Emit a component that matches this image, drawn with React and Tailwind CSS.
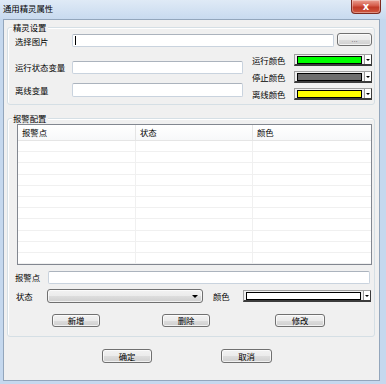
import React from "react";

const BTN =
  "flex items-center justify-center rounded-[3px] border border-[#707070] bg-[linear-gradient(#f2f2f2_0%,#ebebeb_50%,#dddddd_51%,#cfcfcf_100%)] shadow-[inset_0_0_0_1px_rgba(255,255,255,0.7)] leading-none";

function Btn({ w, className = "", primary, children }) {
  return (
    <div
      className={`${BTN} ${primary ? "border-[#3c7fb1] shadow-[inset_0_0_0_1px_#a9dbf6]" : ""} ${className}`}
      style={{ width: w }}
    >
      {children}
    </div>
  );
}

function TextBox({ w, h = 13, caret }) {
  return (
    <div
      className="flex items-center rounded-[2px] border border-[#c9d3de] border-t-[#abb3bd] bg-white pl-[2px]"
      style={{ width: w, height: h }}
    >
      {caret && <div className="h-[9px] w-px bg-black" />}
    </div>
  );
}

function ColorBox({ w, color }) {
  return (
    <div
      className="flex h-[12px] items-center border-t border-l border-b-2 border-r border-t-[#a0a0a0] border-l-[#a0a0a0] border-b-[#3c3c3c] border-r-[#3c3c3c] bg-[#f0f0f0] pl-[2px]"
      style={{ width: w }}
    >
      <div className="h-[8px] flex-1 border border-black" style={{ background: color }} />
      <div className="ml-[2px] h-full w-px bg-[#9a9a9a]" />
      <div className="flex h-full w-[6px] items-center justify-center bg-white">
        <div className="h-0 w-0 border-x-[2px] border-t-[2px] border-x-transparent border-t-black" />
      </div>
    </div>
  );
}

function Group({ title, className = "", children }) {
  return (
    <div
      className={`relative ml-[3px] w-[368px] rounded-[3px] border border-[#d5dfe5] shadow-[inset_1px_1px_0_#fff] ${className}`}
    >
      <span className="absolute left-[4px] top-[-6px] bg-[#f0f0f0] px-px leading-[10px]">{title}</span>
      {children}
    </div>
  );
}

export default function App() {
  return (
    <div className="flex h-[384px] w-[386px] flex-col bg-[#c5d8ee] font-['Noto_Sans_CJK_SC',sans-serif] text-[8.4px] text-black">
      {/* title bar */}
      <div className="flex h-[19px] items-start bg-[linear-gradient(180deg,#dfeaf6,#c8daef)]">
        <span className="ml-[3px] mt-[3px] leading-[10px]">通用精灵属性</span>
        <div className="ml-auto mr-[5px] flex h-[14px] w-[30px] items-center justify-center rounded-b-[4px] border border-t-0 border-[#7d2a20] bg-[linear-gradient(180deg,#eba193,#d45a48_45%,#c13a27_55%,#d0583f)] shadow-[inset_0_0_0_1px_rgba(255,255,255,0.35)]">
          <span className="text-[10px] font-bold leading-none text-white font-['DejaVu_Sans',sans-serif]">x</span>
        </div>
      </div>

      {/* client area */}
      <div className="ml-[3px] h-[362px] w-[377px] border border-[#93a6bc] bg-[#f0f0f0]">
        <Group title="精灵设置" className="mt-[7px] h-[78px] pl-[7px] pt-[5px]">
          <div className="flex h-[14px] items-start">
            <span className="mt-[3px] w-[57px] leading-[10px]">选择图片</span>
            <div className="mt-px">
              <TextBox w={262} caret />
            </div>
            <Btn w={35} className="ml-[3px] h-[13px] text-[#6d6d6d] font-['Liberation_Sans',sans-serif] text-[8px]">...</Btn>
          </div>

          <div className="mt-[7px] flex">
            <div className="w-[228px] pt-[7px]">
              <div className="flex h-[13px] items-center">
                <span className="w-[57px]">运行状态变量</span>
                <TextBox w={171} />
              </div>
              <div className="mt-[9px] flex h-[14px] items-center">
                <span className="w-[57px]">离线变量</span>
                <TextBox w={172} h={14} />
              </div>
            </div>
            <div className="ml-[9px] flex flex-col gap-[5px]">
              <div className="flex h-[12px] items-center">
                <span className="w-[42px]">运行颜色</span>
                <ColorBox w={78} color="#00ff00" />
              </div>
              <div className="flex h-[12px] items-center">
                <span className="w-[42px]">停止颜色</span>
                <ColorBox w={78} color="#6e6e6e" />
              </div>
              <div className="flex h-[12px] items-center">
                <span className="w-[42px]">离线颜色</span>
                <ColorBox w={78} color="#ffff00" />
              </div>
            </div>
          </div>
        </Group>

        <Group title="报警配置" className="mt-[13px] h-[219px] pt-[5px]">
          {/* list view */}
          <div className="ml-[9px] h-[141px] w-[355px] overflow-hidden border border-[#828790] bg-white">
            <div className="grid h-[16px] grid-cols-[118px_117px_1fr] border-b border-[#e5e5e5] bg-[linear-gradient(#ffffff,#f7f8f9)]">
              <div className="flex items-center border-r border-[#e5e5e5] pl-[4px]">报警点</div>
              <div className="flex items-center border-r border-[#e5e5e5] pl-[4px]">状态</div>
              <div className="flex items-center pl-[4px]">颜色</div>
            </div>
            {Array.from({ length: 11 }).map((_, i) => (
              <div key={i} className="grid h-[11.2px] grid-cols-[118px_117px_1fr] border-b border-[#f0f0f0]">
                <div className="border-r border-[#f0f0f0]" />
                <div className="border-r border-[#f0f0f0]" />
                <div />
              </div>
            ))}
          </div>

          <div className="mt-[6px] flex h-[13px] items-center pl-[7px]">
            <span className="w-[33px]">报警点</span>
            <TextBox w={322} />
          </div>

          <div className="mt-[5px] flex h-[14px] items-center">
            <span className="ml-[8px] w-[31px]">状态</span>
            <div className={`${BTN} h-[14px] w-[156px] justify-end pr-[4px]`}>
              <div className="h-0 w-0 border-x-[3px] border-t-[3px] border-x-transparent border-t-black" />
            </div>
            <span className="ml-[10px] w-[30px]">颜色</span>
            <ColorBox w={128} color="#ffffff" />
          </div>

          <div className="mt-[11px] flex h-[13px] items-center">
            <Btn w={48} className="ml-[44px] h-[13px]">新增</Btn>
            <Btn w={48} className="ml-[62px] h-[13px]">删除</Btn>
            <Btn w={50} className="ml-[65px] h-[13px]">修改</Btn>
          </div>
        </Group>

        <div className="mt-[12px] flex h-[14px] items-center">
          <Btn w={50} primary className="ml-[98px] h-[14px]">确定</Btn>
          <Btn w={51} className="ml-[69px] h-[14px]">取消</Btn>
        </div>
      </div>
    </div>
  );
}
